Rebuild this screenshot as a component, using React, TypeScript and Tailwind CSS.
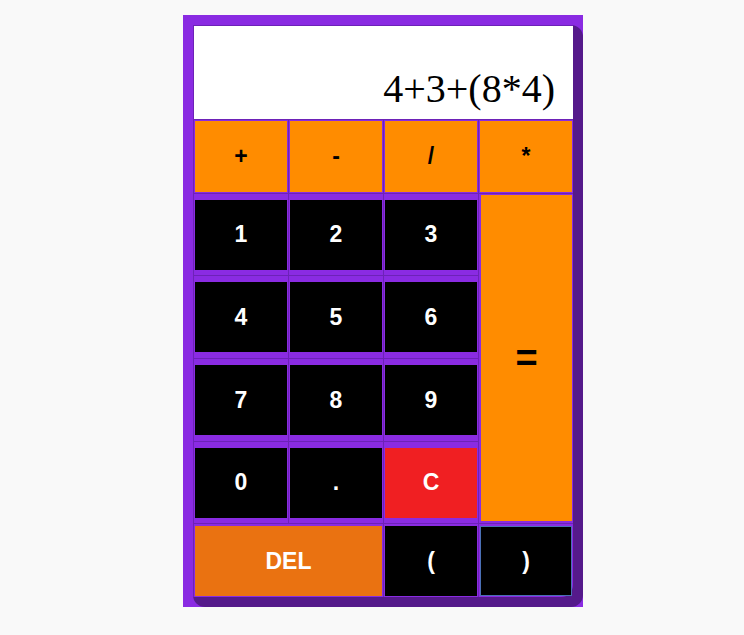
import React from "react";

const digitRows = [
  ["1", "2", "3"],
  ["4", "5", "6"],
  ["7", "8", "9"],
  ["0", ".", "C"],
];

const cell = "border-l border-t border-[#6d22b8] p-[1px]";
const btn = "w-full font-bold text-[23px] font-['Liberation_Sans',Arial,sans-serif]";

export default function App() {
  return (
    <div className="min-h-screen bg-[#f9f9f9] pt-[15px] pl-[183px]">
      {/* ============ CALCULADORA ============ */}
      <div className="w-[400px] h-[592px] bg-[#8a2be2]">
        <div className="w-[390px] h-[582px] bg-[#8a2be2] rounded-[12px] shadow-[10px_10px_0_#551a8b] pl-[10px] pt-[10px]">
          <div className="grid grid-cols-[repeat(4,95px)] grid-rows-[94px_74px_82px_83px_83px_82px_74px]">
            {/* pantalla */}
            <div className="col-span-4 border-l border-t border-[#6d22b8] bg-white flex items-end justify-end pr-[18px]">
              <span className="text-[40px] leading-normal text-black font-['Liberation_Serif','Times_New_Roman',serif]">
                4+3+(8*4)
              </span>
            </div>

            {/* operadores */}
            {["+", "-", "/", "*"].map((op) => (
              <div key={op} className={cell}>
                <button className={`${btn} h-full bg-[#ff8c00] text-black`}>{op}</button>
              </div>
            ))}

            {/* numeros */}
            {digitRows.map((row, r) => (
              <React.Fragment key={r}>
                {row.map((d) => (
                  <div key={d} className={`${cell} flex items-center`}>
                    <button
                      className={`${btn} h-[70px] text-white ${d === "C" ? "bg-[#f01f22]" : "bg-black"}`}
                    >
                      {d}
                    </button>
                  </div>
                ))}
                {r === 0 && (
                  <div className="row-span-4 border-l border-t border-[#6d22b8] pt-[1px] pl-[2px] pr-[1px] pb-[2px]">
                    <button className="w-full h-full bg-[#ff8c00] text-black font-bold text-[38px] font-['Liberation_Sans',Arial,sans-serif]">
                      =
                    </button>
                  </div>
                )}
              </React.Fragment>
            ))}

            {/* fila inferior */}
            <div className="col-span-2 border-l border-t border-[#6d22b8] pt-[2px] pb-[1px] pl-[1px] pr-[1px]">
              <button className={`${btn} h-full bg-[#ea7211] text-white`}>DEL</button>
            </div>
            <div className="border-l border-t border-[#6d22b8] pt-[2px] pb-[1px] pl-[1px] pr-[1px]">
              <button className={`${btn} h-full bg-black text-white`}>(</button>
            </div>
            <div className="border-l border-t border-[#6d22b8] pt-[2px] pb-[1px] pl-[1px] pr-[1px]">
              <button className={`${btn} h-full bg-black text-white border border-[#4a6fb5]`}>)</button>
            </div>
          </div>
        </div>
      </div>
    </div>
  );
}
